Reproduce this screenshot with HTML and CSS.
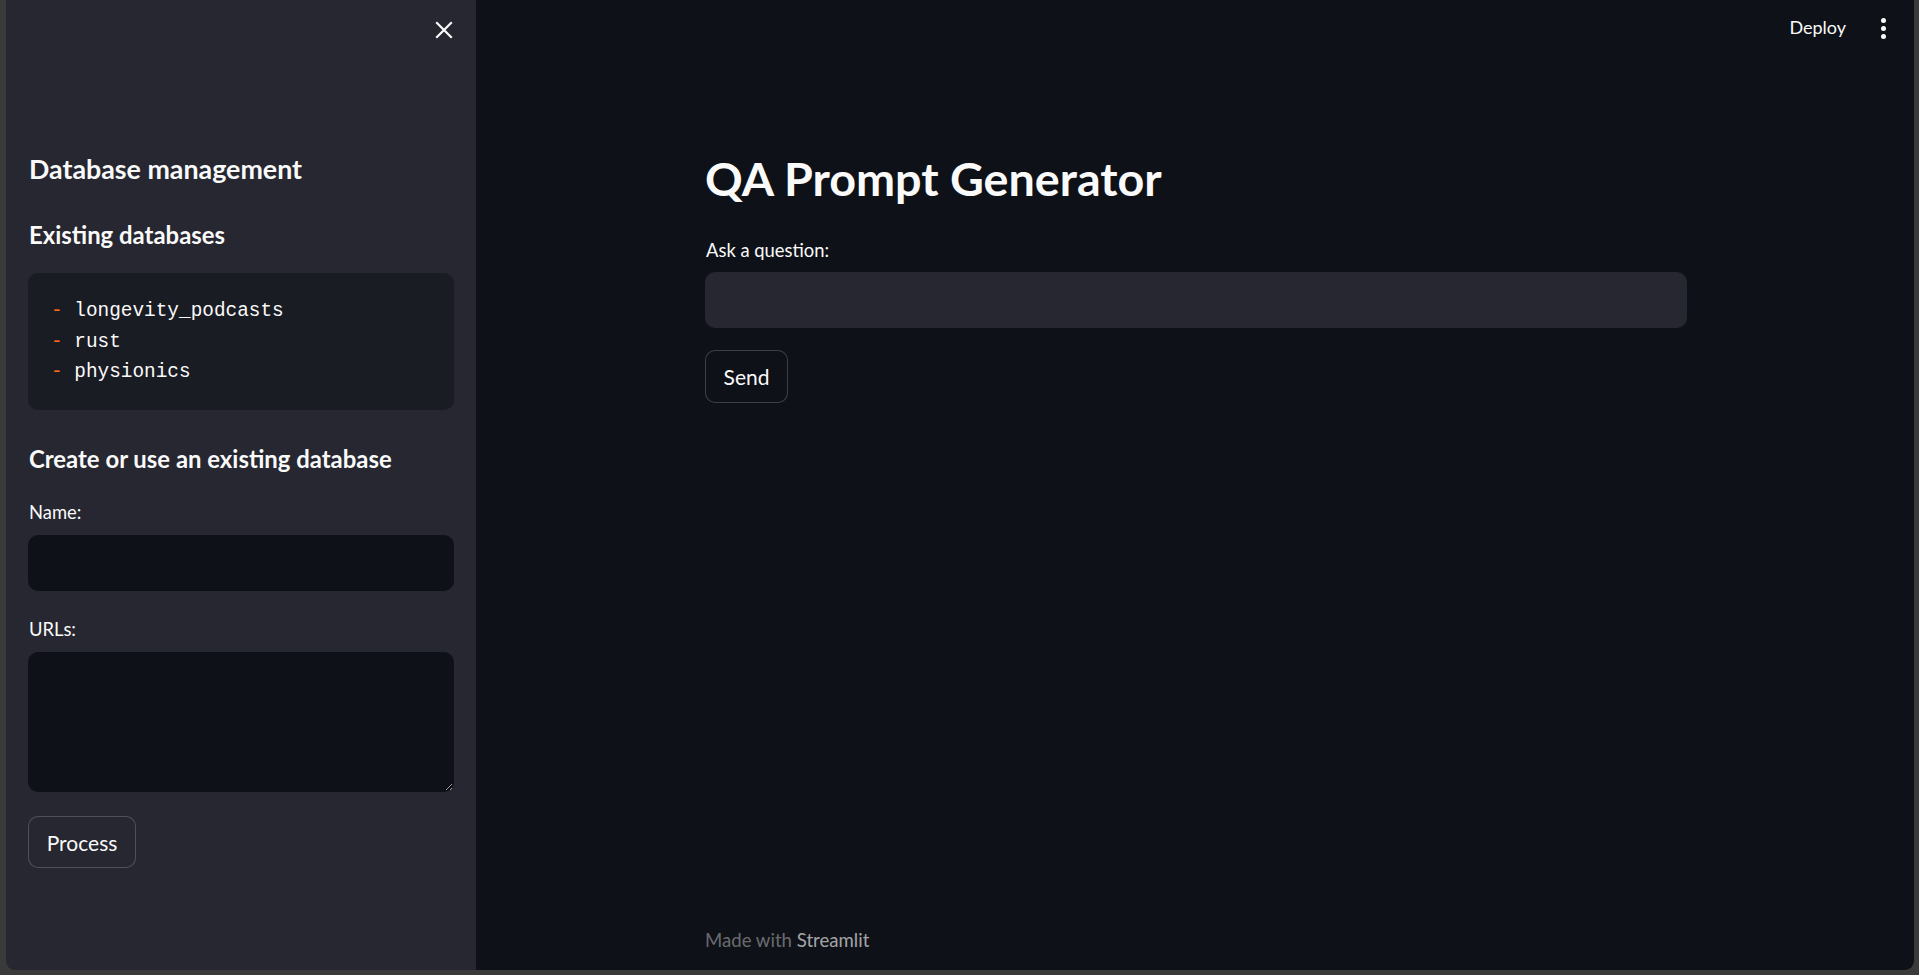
FILE: index.html
```html
<!DOCTYPE html>
<html lang="en">
<head>
<meta charset="utf-8">
<title>QA Prompt Generator</title>
<link rel="stylesheet" href="styles.css">
</head>
<body>
<div class="app">
  <aside class="sidebar">
    <div class="sidebar-top">
      <button class="close-btn" aria-label="Close sidebar">
        <svg width="18" height="18" viewBox="0 0 18 18"><path d="M2 2 L16 16 M16 2 L2 16" stroke="#fafafa" stroke-width="2.2" stroke-linecap="square"/></svg>
      </button>
    </div>
    <h2 class="side-h1">Database management</h2>
    <h3 class="side-h2">Existing databases</h3>
    <pre class="code"><span class="dash">-</span> longevity_podcasts
<span class="dash">-</span> rust
<span class="dash">-</span> physionics</pre>
    <h3 class="side-h2 create">Create or use an existing database</h3>
    <label class="label first">Name:</label>
    <input class="side-input" type="text">
    <label class="label">URLs:</label>
    <textarea class="side-textarea"></textarea>
    <button class="btn process">Process</button>
  </aside>
  <main class="main">
    <header class="topbar">
      <span class="deploy">Deploy</span>
      <span class="kebab"><i></i><i></i><i></i></span>
    </header>
    <section class="content">
      <h1 class="title">QA Prompt Generator</h1>
      <label class="label">Ask a question:</label>
      <input class="main-input" type="text">
      <button class="btn send">Send</button>
    </section>
    <footer class="footer">Made with <span class="brand">Streamlit</span></footer>
  </main>
</div>
</body>
</html>
```
FILE: styles.css
```css
html, body {
  margin: 0;
  padding: 0;
  height: 975px;
  background: #3a3a3a;
  overflow: hidden;
}
body {
  font-family: "Lato", "Noto Sans", sans-serif;
  color: #fafafa;
}
.app {
  margin-left: 6px;
  width: 1908px;
  height: 970px;
  display: flex;
  border-radius: 0 0 9px 9px;
  overflow: hidden;
}
.sidebar {
  width: 426px;
  flex: 0 0 426px;
  background: #262730;
  padding: 0 22px;
  display: flex;
  flex-direction: column;
}
.sidebar-top {
  height: 151px;
  display: flex;
  justify-content: flex-end;
  align-items: flex-start;
}
.close-btn {
  background: none;
  border: 0;
  padding: 0;
  margin: 21px 1px 0 0;
  width: 18px;
  height: 18px;
  display: block;
}
.close-btn svg { display: block; }
.side-h1 {
  margin: 0;
  font-size: 26.8px;
  line-height: 36px;
  font-weight: 700;
  padding-left: 1px;
}
.side-h2 {
  margin: 33px 0 0;
  font-size: 23.9px;
  line-height: 30px;
  font-weight: 700;
  padding-left: 1px;
}
.side-h2.create { margin-top: 34px; }
.code {
  margin: 23px 0 0;
  background: #1a1c24;
  border-radius: 10px;
  padding: 23px 23px 22px;
  font-family: "Liberation Mono", "DejaVu Sans Mono", monospace;
  font-size: 19.4px;
  line-height: 30.5px;
  color: #fafafa;
  height: 92px;
}
.dash { color: #ff6a14; }
.label {
  display: block;
  font-size: 18.4px;
  line-height: 24px;
  margin: 26px 0 0;
  padding-left: 1px;
}
.side-input, .side-textarea, .main-input {
  box-sizing: border-box;
  display: block;
  width: 100%;
  border: 1px solid transparent;
  border-radius: 10px;
  margin: 11px 0 0;
  padding: 0 16px;
  font: inherit;
  color: #fafafa;
  outline: none;
}
.side-input {
  height: 56px;
  background: #0e1117;
}
.side-textarea {
  height: 140px;
  background: #0e1117;
  resize: vertical;
}
.btn {
  box-sizing: border-box;
  font-family: "Lato", "Noto Sans", sans-serif;
  color: #fafafa;
  border: 1px solid rgba(250, 250, 250, 0.2);
  border-radius: 10px;
  font-size: 21px;
  padding: 0;
  align-self: flex-start;
}
.process {
  margin-top: 24px;
  width: 108px;
  height: 52px;
  background: #262730;
}
.main {
  flex: 1;
  background: #0e1117;
  display: flex;
  flex-direction: column;
}
.topbar {
  height: 60px;
  box-sizing: border-box;
  padding: 15px 27px 0 0;
  display: flex;
  justify-content: flex-end;
  align-items: flex-start;
}
.deploy {
  font-size: 18px;
  line-height: 24px;
}
.kebab {
  margin-left: 35px;
  width: 6px;
  display: flex;
  flex-direction: column;
  gap: 3px;
  padding-top: 3px;
}
.kebab i {
  display: block;
  width: 5px;
  height: 5px;
  border-radius: 50%;
  background: #fafafa;
}
.content {
  width: 982px;
  margin: 0 0 0 calc(50% - 490px);
  padding-top: 88px;
  display: flex;
  flex-direction: column;
}
.title {
  margin: 0;
  font-size: 46.7px;
  line-height: 60px;
  font-weight: 700;
}
.content .label { margin-top: 30px; }
.main-input {
  height: 56px;
  background: #262730;
  margin-top: 10px;
}
.send {
  margin-top: 22px;
  width: 83px;
  height: 53px;
  background: #0e1117;
}
.footer {
  margin: auto 0 0 calc(50% - 490px);
  width: 982px;
  padding-bottom: 18px;
  font-size: 18.6px;
  line-height: 24px;
  color: rgba(250, 250, 250, 0.4);
}
.brand { color: rgba(250, 250, 250, 0.65); }
```
